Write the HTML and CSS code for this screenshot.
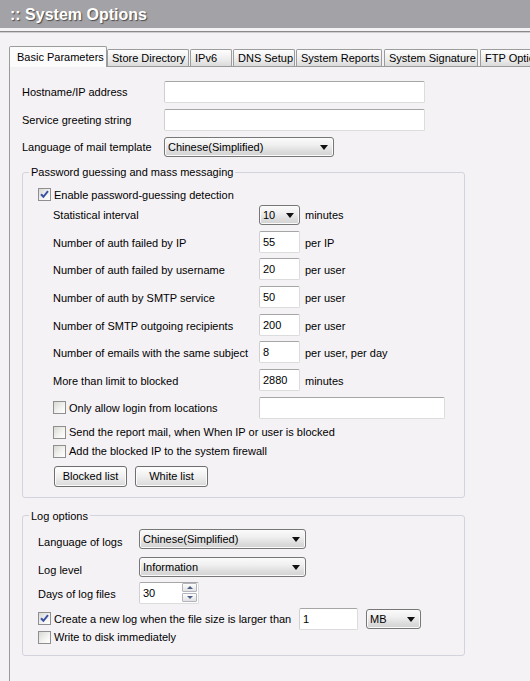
FILE: index.html
```html
<!DOCTYPE html>
<html>
<head>
<meta charset="utf-8">
<link rel="stylesheet" href="styles.css">
</head>
<body>
<div class="titlebar"><span class="title">:: System Options</span></div>
<div class="rule"></div>
<div class="tabs">
  <div class="tab active t-basic">Basic Parameters</div>
  <div class="tab t-store">Store Directory</div>
  <div class="tab t-ipv6">IPv6</div>
  <div class="tab t-dns">DNS Setup</div>
  <div class="tab t-rep">System Reports</div>
  <div class="tab t-sig">System Signature</div>
  <div class="tab t-ftp">FTP Options</div>
</div>
<div class="panel">
  <div class="frow"><div class="lbl w142">Hostname/IP address</div><div class="textbox w261"></div></div>
  <div class="frow"><div class="lbl w142">Service greeting string</div><div class="textbox w261"></div></div>
  <div class="frow sel"><div class="lbl w142">Language of mail template</div><div class="select w170"><span>Chinese(Simplified)</span><i class="arrow"></i></div></div>

  <fieldset class="group g1">
    <legend>Password guessing and mass messaging</legend>
    <div class="gbody b1">
      <div class="cbrow">
        <span class="cb"><svg width="9" height="9" viewBox="0 0 9 9"><path d="M1 4.2 L3.4 6.8 L8 1.2" fill="none" stroke="#3d52a6" stroke-width="2"/></svg></span>
        <span class="cbtext">Enable password-guessing detection</span>
      </div>
      <div class="srow sel first"><div class="lbl w206">Statistical interval</div><div class="select w41"><span>10</span><i class="arrow"></i></div><span class="unit">minutes</span></div>
      <div class="srow irow"><div class="lbl w206 lo">Number of auth failed by IP</div><div class="textbox w41">55</div><span class="unit lo">per IP</span></div>
      <div class="srow irow"><div class="lbl w206 lo">Number of auth failed by username</div><div class="textbox w41">20</div><span class="unit lo">per user</span></div>
      <div class="srow irow"><div class="lbl w206 lo">Number of auth by SMTP service</div><div class="textbox w41">50</div><span class="unit lo">per user</span></div>
      <div class="srow irow"><div class="lbl w206 lo">Number of SMTP outgoing recipients</div><div class="textbox w41">200</div><span class="unit lo">per user</span></div>
      <div class="srow irow"><div class="lbl w206 lo">Number of emails with the same subject</div><div class="textbox w41">8</div><span class="unit lo">per user, per day</span></div>
      <div class="srow irow"><div class="lbl w206 lo">More than limit to blocked</div><div class="textbox w41">2880</div><span class="unit lo">minutes</span></div>
      <div class="srow irow"><div class="lbl w206 cbrow"><span class="cb"></span><span class="cbtext">Only allow login from locations</span></div><div class="textbox w186"></div></div>
      <div class="srow cbrow m7"><span class="cb"></span><span class="cbtext">Send the report mail, when When IP or user is blocked</span></div>
      <div class="srow cbrow m6"><span class="cb"></span><span class="cbtext">Add the blocked IP to the system firewall</span></div>
      <div class="srow btnrow"><div class="btn">Blocked list</div><div class="btn">White list</div></div>
    </div>
  </fieldset>

  <fieldset class="group g2">
    <legend>Log options</legend>
    <div class="gbody b2">
      <div class="lrow r1"><div class="lbl w101 low">Language of logs</div><div class="select w167"><span>Chinese(Simplified)</span><i class="arrow"></i></div></div>
      <div class="lrow r2"><div class="lbl w101 low">Log level</div><div class="select w167"><span>Information</span><i class="arrow"></i></div></div>
      <div class="lrow r3"><div class="lbl w101 lo">Days of log files</div>
        <div class="textbox w60 spin"><span>30</span>
          <div class="spinbtns">
            <div class="sb"><i class="up"></i></div>
            <div class="sb"><i class="down"></i></div>
          </div>
        </div>
      </div>
      <div class="lrow r4">
        <div class="cbrow w261"><span class="cb"><svg width="9" height="9" viewBox="0 0 9 9"><path d="M1 4.2 L3.4 6.8 L8 1.2" fill="none" stroke="#3d52a6" stroke-width="2"/></svg></span><span class="cbtext">Create a new log when the file size is larger than</span></div>
        <div class="textbox w59">1</div>
        <div class="select w55 mb"><span>MB</span><i class="arrow"></i></div>
      </div>
      <div class="lrow r5 cbrow"><span class="cb"></span><span class="cbtext">Write to disk immediately</span></div>
    </div>
  </fieldset>
</div>
</body>
</html>
```
FILE: styles.css
```css
html, body {
  margin: 0;
  padding: 0;
}
body {
  width: 530px;
  height: 681px;
  overflow: hidden;
  background: #f5f2f5;
  font-family: "Liberation Sans", Arial, sans-serif;
  font-size: 11px;
  line-height: 14px;
  color: #000;
}
.titlebar {
  height: 28px;
  box-sizing: border-box;
  background: #a3a2a6;
  padding: 1px 0 0 10px;
  display: flex;
  align-items: center;
}
.title {
  color: #fff;
  font-weight: bold;
  font-size: 16px;
  line-height: 18px;
  text-shadow: 1px 1px 1px #4a4a4a;
}
.rule {
  margin-top: 3px;
  height: 1px;
  background: #8a8a8a;
  border-bottom: 1px solid #cfcfcf;
}
.tabs {
  display: flex;
  align-items: flex-end;
  height: 21px;
  margin-top: 13px;
  padding-left: 9px;
}
.tab {
  box-sizing: border-box;
  flex: none;
  height: 17px;
  margin-bottom: 1px;
  border: 1px solid #9c9c9c;
  border-bottom: none;
  border-radius: 2px 2px 0 0;
  background: linear-gradient(#fefefe, #ececec 60%, #dadada);
  padding-left: 4px;
  line-height: 16px;
  white-space: nowrap;
  overflow: hidden;
}
.tab.active {
  height: 21px;
  margin-bottom: 0;
  background: #fcfbfc;
  padding: 3px 0 0 7px;
  line-height: 14px;
  position: relative;
  z-index: 1;
}
.t-basic { width: 98px; }
.t-store { width: 82px; }
.t-ipv6 { width: 42px; margin-left: 1px; }
.t-dns { width: 62px; margin-left: 1px; }
.t-rep { width: 86px; margin-left: 1px; }
.t-sig { width: 94px; margin-left: 2px; }
.t-ftp { width: 80px; margin-left: 2px; }

.panel {
  box-sizing: border-box;
  height: 615px;
  margin-left: 9px;
  margin-top: -1px;
  border-left: 1px solid #9a9a9a;
  border-top: 1px solid #9a9a9a;
  padding: 14px 0 0 12px;
}
.frow {
  display: flex;
  align-items: center;
  height: 22px;
  margin-bottom: 6px;
}
.frow.sel {
  height: 20px;
  margin-bottom: 0;
}
.lbl { flex: none; white-space: nowrap; }
.w142 { width: 142px; }
.w206 { width: 206px; }
.w101 { width: 101px; }
.w261 { width: 261px; }
.w170 { width: 170px; }
.w167 { width: 167px; }
.w41 { width: 41px; }
.w186 { width: 186px; }
.w60 { width: 60px; }
.w59 { width: 59px; }
.w55 { width: 55px; }

.textbox {
  box-sizing: border-box;
  flex: none;
  height: 22px;
  background: #fff;
  border: 1px solid #dcdcdc;
  border-top-color: #a6a6a6;
  border-left-color: #d0d0d0;
  border-radius: 2px;
  padding: 0 3px;
  display: flex;
  align-items: center;
}
.select {
  box-sizing: border-box;
  flex: none;
  height: 20px;
  border: 1px solid #777;
  border-radius: 3px;
  box-shadow: inset 0 0 0 1px #fafafa;
  background: linear-gradient(#fbfbfb 0%, #efefef 40%, #dcdcdc 75%, #d2d2d2 100%);
  display: flex;
  align-items: center;
  justify-content: space-between;
  padding: 0 5px 0 3px;
  white-space: nowrap;
}
.arrow {
  display: block;
  width: 0;
  height: 0;
  border-left: 4px solid transparent;
  border-right: 4px solid transparent;
  border-top: 5px solid #111;
  margin-top: 1px;
}
.unit {
  margin-left: 5px;
  white-space: nowrap;
}
.lo { padding-top: 2px; }
.low { padding-top: 6px; }

.group {
  box-sizing: border-box;
  width: 443px;
  min-width: 0;
  margin: 8px 0 0 0;
  padding: 0;
  border: 1px solid #d2d3dc;
  border-radius: 3px;
}
.group legend {
  margin-left: 6px;
  padding: 0 2px;
  line-height: 14px;
}
.g2 { margin-top: 11px; }
.gbody.b1 { padding: 9px 0 10px 15px; }
.gbody.b2 { padding: 6px 0 11px 15px; }

.cbrow {
  display: flex;
  align-items: center;
  height: 13px;
  white-space: nowrap;
}
.cb {
  box-sizing: border-box;
  flex: none;
  width: 13px;
  height: 13px;
  border: 1px solid #8f8f8f;
  background: linear-gradient(135deg, #d8d8d4 0%, #f4f4f2 60%, #ffffff 100%);
  display: flex;
  align-items: center;
  justify-content: center;
}
.cbtext { margin-left: 3px; }

.srow {
  display: flex;
  align-items: center;
  padding-left: 15px;
}
.srow.sel {
  height: 20px;
  margin-top: 4px;
}
.srow.irow {
  height: 22px;
  margin-top: 5.67px;
}
.srow.cbrow { height: 13px; }
.m7 { margin-top: 7px; }
.m6 { margin-top: 6px; }
.btnrow {
  margin-top: 8px;
  gap: 8px;
}
.btnrow .btn:first-child { margin-left: 1px; }
.btn {
  box-sizing: border-box;
  width: 73px;
  height: 21px;
  border: 1px solid #6f6f6f;
  border-radius: 3px;
  box-shadow: inset 0 0 0 1px #fbfbfb;
  background: linear-gradient(#ffffff, #efefef 50%, #d9d9d9);
  display: flex;
  align-items: center;
  justify-content: center;
  white-space: nowrap;
}

.lrow {
  display: flex;
  align-items: center;
}
.lrow.r1 { height: 20px; }
.lrow.r2 { height: 20px; margin-top: 8px; }
.lrow.r3 { height: 22px; margin-top: 5px; }
.lrow.r4 { height: 22px; margin-top: 4px; }
.lrow.r5 { height: 13px; margin-top: 1px; }
.r4 .cbrow { flex: none; }
.r4 .textbox { margin-left: 0; }
.r4 .mb { margin-left: 8px; }

.spin { padding-right: 1px; }
.spinbtns {
  margin-left: auto;
  display: flex;
  flex-direction: column;
  gap: 1px;
}
.sb {
  box-sizing: border-box;
  width: 15px;
  height: 9px;
  border: 1px solid #b4b4bc;
  border-radius: 1px;
  background: linear-gradient(#fdfdfd, #e2e2e6);
  display: flex;
  align-items: center;
  justify-content: center;
}
.sb i {
  display: block;
  width: 0;
  height: 0;
  border-left: 3px solid transparent;
  border-right: 3px solid transparent;
}
.sb .up { border-bottom: 3px solid #4e5f86; }
.sb .down { border-top: 3px solid #4e5f86; }
```
